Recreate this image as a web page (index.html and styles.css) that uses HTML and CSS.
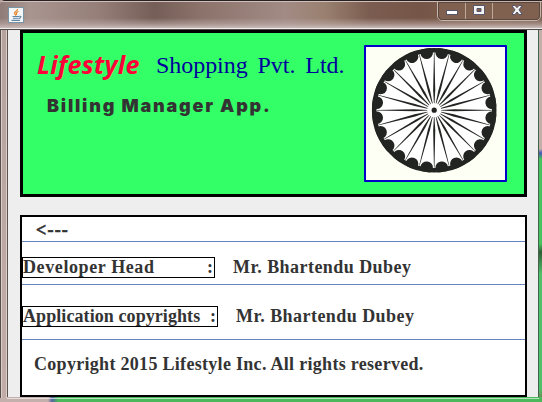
FILE: index.html
```
<!DOCTYPE html>
<html lang="en">
<head>
<meta charset="utf-8">
<title>Billing Manager</title>
<link rel="stylesheet" href="styles.css">
</head>
<body>
<div class="window">
  <header class="titlebar">
    <svg class="java" width="16" height="16" viewBox="0 0 16 16">
      <rect x=".5" y=".5" width="15" height="15" fill="#f5f6f7" stroke="#7895a8"/>
      <path d="M9.500 2C10 4 6 4.500 6.500 6.500Q7 7.500 8 8.500M10.500 4.500C8 5.500 8 6.500 8.800 8" fill="none" stroke="#e8862c" stroke-width="1.300"/>
      <path d="M4.500 9.500H11M5 11.300H10.500M3.500 13.400H12M11 9.300Q14 9 12.500 10.700L10.800 11.500" fill="none" stroke="#6088a5" stroke-width="1.100"/>
    </svg>
    <div class="controls">
      <span class="control min"><svg width="12" height="6"><rect x=".5" y=".5" width="11" height="4" fill="#fff" stroke="#56566c"/></svg></span>
      <span class="control max"><svg width="12" height="10"><path d="M.5.500H11.500V9.500H.5ZM4 3.500V6.500H8V3.500Z" fill="#f4f4f4" fill-rule="evenodd" stroke="#56566c"/></svg></span>
      <span class="control close"><svg width="12" height="10"><path d="M.8.500H4L6 2.700 8 .5H11.200L8 4.800 11.200 9.500H8L6 7 4 9.500H.8L4 4.800Z" fill="#f4f4f4" stroke="#56566c"/></svg></span>
    </div>
  </header>
  <main class="client">
    <section class="banner">
      <div class="titles">
        <h1 class="name"><span class="brand">Lifestyle</span><span class="company">Shopping Pvt. Ltd.</span></h1>
        <h2 class="app">Billing Manager App.</h2>
      </div>
      <div class="emblem">
        <svg width="139" height="133" viewBox="366 47 139 133">
          <defs>
            <g id="spoke">
              <path d="M-.25-57.500H.25L1.050-20 .3-7H-.3L-1.050-20Z"/>
              <circle cy="-58" r="6.300" transform="rotate(7.500)"/>
            </g>
            <g id="quarter">
              <use href="#spoke"/>
              <use href="#spoke" transform="rotate(15)"/>
              <use href="#spoke" transform="rotate(30)"/>
              <use href="#spoke" transform="rotate(45)"/>
              <use href="#spoke" transform="rotate(60)"/>
              <use href="#spoke" transform="rotate(75)"/>
            </g>
            <clipPath id="rim"><circle r="62.300"/></clipPath>
          </defs>
          <g transform="translate(434.200 110.200)" fill="#222421">
            <circle r="60" fill="#fff" stroke="#222421" stroke-width="4.600"/>
            <g clip-path="url(#rim)">
              <use href="#quarter"/>
              <use href="#quarter" transform="rotate(90)"/>
              <use href="#quarter" transform="rotate(180)"/>
              <use href="#quarter" transform="rotate(270)"/>
            </g>
            <circle r="5.300" fill="#fff"/>
            <circle r="2.600"/>
          </g>
        </svg>
      </div>
    </section>
    <section class="details">
      <div class="row back"><span class="arrow">&lt;---</span></div>
      <div class="row developer"><span class="label"><span class="key">Developer Head</span><span>:</span></span><span class="value">Mr. Bhartendu Dubey</span></div>
      <div class="row rights"><span class="label"><span class="key">Application copyrights</span><span>:</span></span><span class="value">Mr. Bhartendu Dubey</span></div>
      <div class="row copyright"><span class="notice">Copyright 2015 Lifestyle Inc. All rights reserved.</span></div>
    </section>
  </main>
</div>
</body>
</html>
```
FILE: styles.css
```
* { box-sizing: border-box; }
body { margin: 0; overflow: hidden; }
svg { display: block; }
.window {
  width: 542px; height: 402px; padding: 0 3px 5px 7px;
  display: flex; flex-direction: column;
  background:
    linear-gradient(90deg, #5a4d49 0 1px, #d8cfcc 1px 2px, transparent 2px 6px, #d8cfcc 6px) 0 30px / 7px 368px no-repeat,
    linear-gradient(#fff9 0 1px, transparent 1px) 7px 398px / 532px 4px no-repeat,
    linear-gradient(90deg, #c3afab 0 48px, #5665a0 52px, #4ab85b 58px 100%) 0 397px / 542px 5px no-repeat,
    linear-gradient(#c2afaa 0 120px, #4656b4 124px, #46c25e 130px 215px, #315e38 223px, #4fc16b 245px 360px, #80704c) 539px 29px / 3px 373px no-repeat,
    linear-gradient(#b5a29d, #c2aca8);
}
.titlebar {
  height: 30px; margin: 0 -3px 0 -7px; padding-left: 8px;
  display: flex; align-items: flex-start; justify-content: space-between;
  border-radius: 5px 0 0;
  background:
    linear-gradient(#2b2020 0 1px, #cdbfbb 1px 2px, transparent 2px),
    linear-gradient(transparent 18px, #bcaaa799 24px, #c9bbb8 28px, #eee 28px 29px, #504844 29px),
    linear-gradient(90deg, #8f7c78, #a99590 30px, #957e78 100px, #755e57 155px, #8b736b 200px, #a28b85 285px, #99806f 325px, #7b5c50 370px, #755547 420px, #83634f 500px, #795e50);
}
.java { margin-top: 7px; }
.controls {
  width: 104px; height: 20px; margin-top: 1px; margin-right: 1px;
  display: flex; border: 1px solid #c6b3a9; border-radius: 0 0 5px 5px;
  background: #80614f; outline: 1px solid #594840; outline-offset: -2px;
}
.control { display: flex; justify-content: center; border-right: 1px solid #bca99c; }
.min { width: 28px; padding-top: 8px; }
.max { width: 27px; padding-top: 3px; }
.close { width: 47px; padding-top: 3px; border: 0; }
.client {
  flex: 1; padding: 0 12px; background: #eee;
  border-left: 1px solid #5d524e; border-right: 1px solid #45634a;
}
.banner {
  width: 507px; height: 167px; border: 3px solid #000; background: #3f6;
  display: flex; justify-content: space-between; padding: 12px 17px 0 14px;
}
.name { margin: 4px 0 0; height: 36px; display: flex; line-height: 30px; font-weight: 400; white-space: nowrap; }
.brand { width: 119px; color: #ff0038; font: italic 700 25px/30px "Open Sans", sans-serif; letter-spacing: .3px; }
.company { color: #00009c; font: 24px/32px "Liberation Serif", serif; letter-spacing: -.05px; word-spacing: 4px; }
.app { margin: 8px 0 0 10px; color: #333; font: 900 18px/26px Inter, sans-serif; letter-spacing: 1.78px; white-space: nowrap; }
.emblem { width: 143px; height: 137px; border: 2px solid #0000c8; border-radius: 1px; background: #fdfff5; }
.details {
  width: 507px; height: 182px; margin-top: 18px; border: 2px solid #000; background: #fff;
  color: #333; font: 700 18px/20px "Liberation Serif", serif; white-space: nowrap;
}
.row { display: flex; align-items: flex-start; border-bottom: 1px solid #6685bd; }
.back { height: 25px; padding: 3px 0 0 14px; }
.arrow { letter-spacing: 1.2px; -webkit-text-stroke: .6px #333; }
.developer { height: 43px; padding-top: 15px; }
.rights { height: 55px; padding-top: 21px; }
.copyright { height: 55px; border: 0; padding: 14px 0 0 12px; }
.label { display: flex; justify-content: space-between; width: 193px; height: 21px; border: 1px solid #000; padding: 0 1px 0 0; line-height: 18px; }
.developer .key { letter-spacing: .6px; }
.rights .label { width: 196px; }
.rights .key { letter-spacing: .08px; }
.value { margin-left: 18px; letter-spacing: .45px; }
.notice { letter-spacing: .3px; }
```
